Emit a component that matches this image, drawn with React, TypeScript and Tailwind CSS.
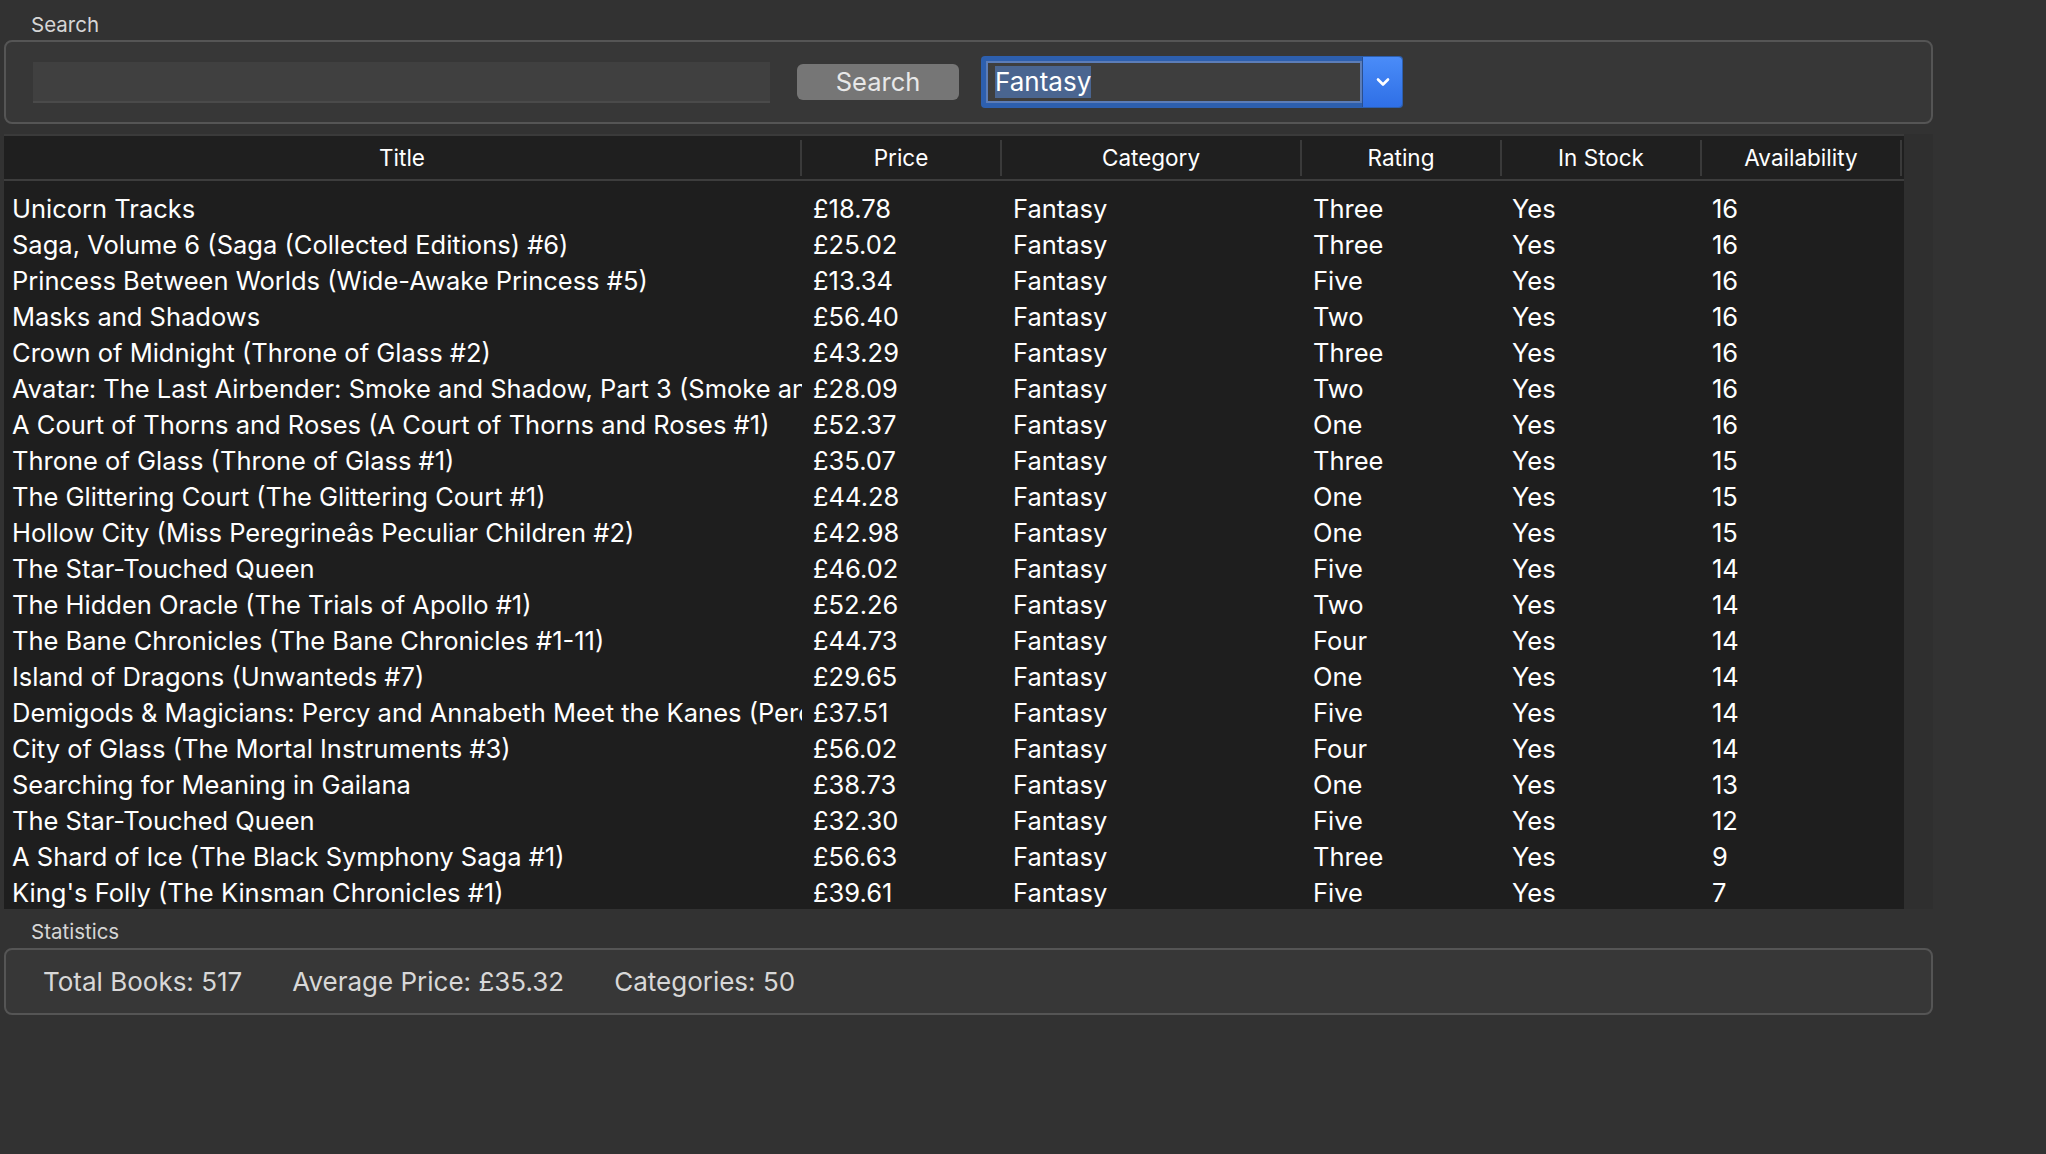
import React from "react";

type Row = [string, string, string, string, string, string];

const rows: Row[] = [
  ["Unicorn Tracks", "£18.78", "Fantasy", "Three", "Yes", "16"],
  ["Saga, Volume 6 (Saga (Collected Editions) #6)", "£25.02", "Fantasy", "Three", "Yes", "16"],
  ["Princess Between Worlds (Wide-Awake Princess #5)", "£13.34", "Fantasy", "Five", "Yes", "16"],
  ["Masks and Shadows", "£56.40", "Fantasy", "Two", "Yes", "16"],
  ["Crown of Midnight (Throne of Glass #2)", "£43.29", "Fantasy", "Three", "Yes", "16"],
  ["Avatar: The Last Airbender: Smoke and Shadow, Part 3 (Smoke and Shadow #3)", "£28.09", "Fantasy", "Two", "Yes", "16"],
  ["A Court of Thorns and Roses (A Court of Thorns and Roses #1)", "£52.37", "Fantasy", "One", "Yes", "16"],
  ["Throne of Glass (Throne of Glass #1)", "£35.07", "Fantasy", "Three", "Yes", "15"],
  ["The Glittering Court (The Glittering Court #1)", "£44.28", "Fantasy", "One", "Yes", "15"],
  ["Hollow City (Miss Peregrineâs Peculiar Children #2)", "£42.98", "Fantasy", "One", "Yes", "15"],
  ["The Star-Touched Queen", "£46.02", "Fantasy", "Five", "Yes", "14"],
  ["The Hidden Oracle (The Trials of Apollo #1)", "£52.26", "Fantasy", "Two", "Yes", "14"],
  ["The Bane Chronicles (The Bane Chronicles #1-11)", "£44.73", "Fantasy", "Four", "Yes", "14"],
  ["Island of Dragons (Unwanteds #7)", "£29.65", "Fantasy", "One", "Yes", "14"],
  ["Demigods & Magicians: Percy and Annabeth Meet the Kanes (Percy Jackson & Kane Chronicles Crossover #1-3)", "£37.51", "Fantasy", "Five", "Yes", "14"],
  ["City of Glass (The Mortal Instruments #3)", "£56.02", "Fantasy", "Four", "Yes", "14"],
  ["Searching for Meaning in Gailana", "£38.73", "Fantasy", "One", "Yes", "13"],
  ["The Star-Touched Queen", "£32.30", "Fantasy", "Five", "Yes", "12"],
  ["A Shard of Ice (The Black Symphony Saga #1)", "£56.63", "Fantasy", "Three", "Yes", "9"],
  ["King's Folly (The Kinsman Chronicles #1)", "£39.61", "Fantasy", "Five", "Yes", "7"],
];

const headers: { label: string; w: string }[] = [
  { label: "Title", w: "w-[798px]" },
  { label: "Price", w: "w-[200px]" },
  { label: "Category", w: "w-[300px]" },
  { label: "Rating", w: "w-[200px]" },
  { label: "In Stock", w: "w-[200px]" },
  { label: "Availability", w: "w-[200px]" },
];

export default function App() {
  return (
    <div
      className="w-[2046px] h-[1154px] bg-[#323232] text-white overflow-hidden"
      style={{ fontFamily: "Inter, 'Noto Sans', sans-serif" }}
    >
      <div className="pl-[4px] w-[1933px]">
        {/* Search label */}
        <div className="h-[40px] pt-[12px] pl-[27px] text-[20.5px] leading-[26px] text-[#d6d6d6]">Search</div>

        {/* Search group box */}
        <div className="h-[84px] box-border rounded-[8px] border-2 border-[#555555] bg-[#373737] flex items-center pl-[27px]">
          <div className="w-[737px] h-[41px] bg-[#404040] border-b-2 border-[#4a4a4a]" />
          <div className="ml-[27px] w-[162px] h-[36px] rounded-[6px] bg-[#767676] flex items-center justify-center text-[25.5px] text-[#e8e8e8]">
            Search
          </div>
          <div className="ml-[22px] w-[422px] h-[52px] flex rounded-[4px] overflow-hidden bg-[#2d5fae]">
            <div className="flex-1 py-[5px] pl-[5px]">
              <div className="h-full border-[2px] border-[#5c7db8] bg-[#3e3e3e] flex items-center pl-[7px]">
                <span className="bg-[#4a6590] text-white text-[26px] leading-[32px]">Fantasy</span>
              </div>
            </div>
            <div className="w-[40px] my-[1px] mr-[1px] rounded-r-[4px] bg-gradient-to-b from-[#4a8cf8] to-[#2f6fe6] flex items-center justify-center border-l border-[#2a4f8f]">
              <svg width="16" height="12" viewBox="0 0 16 12">
                <path d="M3 3.5 L8 8.5 L13 3.5" fill="none" stroke="white" strokeWidth="2.6" strokeLinecap="round" strokeLinejoin="round" />
              </svg>
            </div>
          </div>
        </div>

        {/* Table */}
        <div className="mt-[10px] h-[775px] flex">
          <div className="w-[1900px] h-full bg-[#1e1e1e] border-t-2 border-[#3a3a3a] overflow-hidden">
            <div className="h-[45px] flex border-b-2 border-[#3d3d3d] bg-[#1f1f1f]">
              {headers.map((h) => (
                <div key={h.label} className={`${h.w} flex items-center`}>
                  <div className="flex-1 text-center text-[22.5px] text-white">{h.label}</div>
                  <div className="w-[2px] h-[36px] bg-[#3a3a3a]" />
                </div>
              ))}
            </div>
            <div className="pt-[10px]">
              {rows.map((r, i) => (
                <div key={i} className="h-[36px] flex items-center text-[25.5px] leading-[36px] text-white whitespace-nowrap">
                  <div className="w-[798px] pl-[8px] pr-[2px] overflow-hidden">{r[0]}</div>
                  <div className="w-[200px] pl-[11px] overflow-hidden">{r[1]}</div>
                  <div className="w-[300px] pl-[11px] overflow-hidden">{r[2]}</div>
                  <div className="w-[200px] pl-[11px] overflow-hidden">{r[3]}</div>
                  <div className="w-[200px] pl-[10px] overflow-hidden">{r[4]}</div>
                  <div className="w-[200px] pl-[10px] overflow-hidden">{r[5]}</div>
                </div>
              ))}
            </div>
          </div>
          <div className="w-[29px] h-full bg-[#2f2f2f]" />
        </div>

        {/* Statistics label */}
        <div className="h-[39px] pt-[10px] pl-[27px] text-[20.5px] leading-[26px] text-[#d6d6d6]">Statistics</div>

        {/* Statistics box */}
        <div className="h-[67px] box-border rounded-[8px] border-2 border-[#555555] bg-[#373737] flex items-center pl-[37px] gap-[50px] text-[26px] text-[#d8d8d8]">
          <span>Total Books: 517</span>
          <span>Average Price: £35.32</span>
          <span>Categories: 50</span>
        </div>
      </div>
    </div>
  );
}
